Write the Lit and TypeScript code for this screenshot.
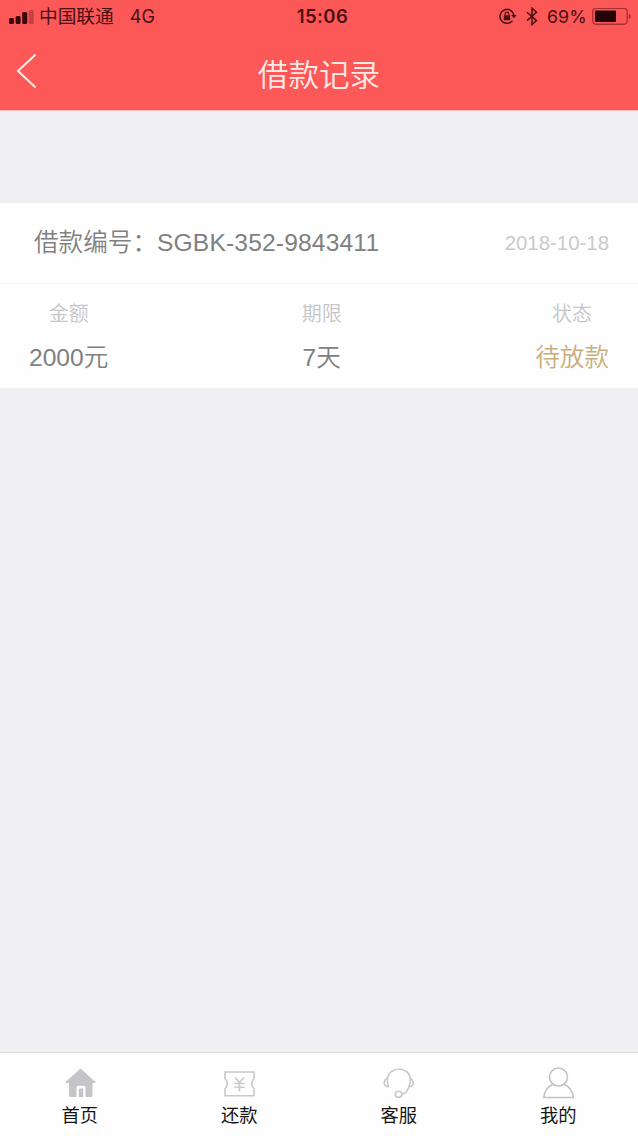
import { LitElement, html, css, svg } from "lit";
import { customElement, property } from "lit/decorators.js";

const FONT = css`"Liberation Sans", "Noto Sans CJK SC", sans-serif`;

@customElement("status-bar")
class StatusBar extends LitElement {
  static styles = css`
    :host { display: grid; grid-template-columns: 1fr auto 1fr; align-items: center; height: 33px; padding: 0 7px 0 9px; color: #4a1014; font: 400 18.7px/33px "Inter", "Noto Sans CJK SC", sans-serif; }
    .side { display: flex; align-items: center; }
    .right { justify-content: flex-end; }
    .signal { margin-right: 5px; }
    .network { margin-left: 16px; font-size: 18px; }
    .time { font-weight: 600; font-size: 18.5px; letter-spacing: 0.4px; padding-left: 5px; }
    .bluetooth { margin: 0 9px 0 9px; }
    .percent { font-size: 17.8px; margin-right: 5px; letter-spacing: 0.2px; }
    svg { display: block; flex: none; }
  `;
  render() {
    return html`
      <div class="side">
        <svg class="signal" width="25" height="16" viewBox="0 0 25 16">
          <g fill="#3a070b">
            <rect x="0" y="9" width="5" height="6" rx="1.5" />
            <rect x="6.6" y="7" width="5" height="8" rx="1.5" />
            <rect x="13.2" y="3" width="5" height="12" rx="1.5" />
          </g>
          <rect x="19.8" y="1" width="5" height="14" rx="1.5" fill="#c24347" />
        </svg>
        <span>中国联通</span><span class="network">4G</span>
      </div>
      <div class="time">15:06</div>
      <div class="side right">
        <svg width="18" height="17" viewBox="0 0 18 17" fill="none" stroke="#4a1014" stroke-width="1.5">
          <path d="M13.5 12.7A7 7 0 1 1 15 8" />
          <path d="M12.2 7h5.4l-2.7 3.4z" fill="#4a1014" stroke="none" />
          <rect x="4.8" y="7.3" width="6.4" height="4.9" rx=".6" fill="#4a1014" stroke="none" />
          <path d="M6.1 7.5V6a1.9 1.9 0 0 1 3.8 0v1.5" stroke-width="1.2" />
        </svg>
        <svg class="bluetooth" width="12" height="19" viewBox="0 0 12 19" fill="none" stroke="#4a1014" stroke-width="1.5">
          <path d="M1 5.2l9.5 8.4L6 17.6V1.2l4.5 4L1 13.6" />
        </svg>
        <span class="percent">69%</span>
        <svg width="39" height="18" viewBox="0 0 39 18">
          <rect x=".8" y=".3" width="34.4" height="16" rx="3.5" fill="none" stroke="#a92f36" stroke-width="1.4" />
          <rect x="3" y="2.5" width="21" height="11.6" rx="1" fill="#250205" />
          <path d="M36.8 5.500v5.600q2-.9 2-2.800t-2-2.800z" fill="#a92f36" />
        </svg>
      </div>`;
  }
}

@customElement("nav-header")
class NavHeader extends LitElement {
  @property() heading = "";
  static styles = css`
    :host { display: grid; grid-template-columns: 60px 1fr 60px; height: 77px; font-family: ${FONT}; }
    .back { padding: 20px 0 0 16px; }
    .heading { margin: 0; padding-top: 20px; text-align: center; font-weight: 350; font-size: 30.6px; line-height: 44px; color: #ffe9e6; }
    svg { display: block; }
  `;
  render() {
    return html`
      <div class="back">
        <svg width="22" height="36" viewBox="0 0 22 36" fill="none" stroke="#fff0e8" stroke-width="2">
          <path d="M19.600 1.500L2 18l17.600 16.500" />
        </svg>
      </div>
      <h1 class="heading">${this.heading}</h1>`;
  }
}

@customElement("loan-card")
class LoanCard extends LitElement {
  @property() number = "";
  @property() date = "";
  @property() amount = "";
  @property() term = "";
  @property() status = "";
  static styles = css`
    :host { display: block; height: 185px; background: #fefefe; font-family: ${FONT}; font-weight: 350; color: #808080; }
    .top { display: flex; justify-content: space-between; box-sizing: border-box; height: 81px; padding: 0 29px 0 34px; border-bottom: 1px solid #f4f4f5; line-height: 80px; font-size: 24.6px; }
    .code { letter-spacing: 0.16px; }
    .date { font-size: 20.4px; color: #cacaca; }
    .fields { display: flex; justify-content: space-between; padding: 15px 29px 0; text-align: center; }
    .label { font-size: 20px; line-height: 30px; color: #c6c6c6; }
    .value { margin-top: 11px; font-size: 24.6px; line-height: 36px; }
    .pending { color: #c9ad7c; }
  `;
  render() {
    return html`
      <div class="top">
        <span>借款编号：<span class="code">${this.number}</span></span>
        <span class="date">${this.date}</span>
      </div>
      <div class="fields">
        <div><div class="label">金额</div><div class="value">${this.amount}</div></div>
        <div><div class="label">期限</div><div class="value">${this.term}</div></div>
        <div><div class="label">状态</div><div class="value pending">${this.status}</div></div>
      </div>`;
  }
}

const icons = {
  home: svg`<path fill="#c5c5c9" fill-rule="evenodd" d="M16.500 1.500L31.500 15q.5 1-.8 1H28.500V28.500q0 1.500-1.500 1.500H6.500Q5 30 5 28.500V16H2.300Q1 16 1.500 15zM12.500 30h9V20.500q0-1.700-1.700-1.700h-5.600q-1.700 0-1.700 1.700z"/><path fill="#c5c5c9" d="M14.800 30v-7.500q0-1 1-1h2.400q1 0 1 1V30z"/>`,
  ticket: svg`<g fill="none" stroke="#c9c9cd" stroke-width="1.600"><path d="M2 5h29v6.500q-4.600 5 0 10.200v7H2v-7q4.600-5.200 0-10.200z"/><path d="M12 10.500l4.500 5 4.500-5M16.500 15.500v9M11.500 16.500h10M11.500 20.300h10"/></g>`,
  headset: svg`<g fill="none" stroke="#c9c9cd" stroke-width="1.600"><path d="M5.500 19.800C3.500 14 4.200 8 8.500 4.500Q16-.5 23.500 4.500C28 8 28 14 25.800 20Q23.500 26.800 18.800 27.200"/><path d="M4.800 11.200Q1.200 12.600 1.200 15.900T5.500 19.800M26.800 11.200q3.400 1.400 3.400 4.700T25.800 20"/><ellipse cx="15.600" cy="27.300" rx="3.300" ry="3.100"/></g>`,
  user: svg`<g fill="none" stroke="#c2c2c6" stroke-width="1.500"><circle cx="16.500" cy="10" r="9"/><path d="M11 17.200Q3 20.500 1.700 30.500h29.800Q30 20.500 22 17.200"/></g>`,
};

@customElement("tab-bar")
class TabBar extends LitElement {
  static styles = css`
    :host { display: grid; grid-template-columns: repeat(4, 1fr); box-sizing: border-box; height: 84px; border-top: 1px solid #dededf; background: #fefefe; font: 400 18.3px/28px "Noto Sans CJK SC", sans-serif; color: #151515; }
    .tab { display: flex; flex-direction: column; align-items: center; padding-top: 14px; }
    .icon { display: block; margin-bottom: 1px; }
  `;
  private tabs = [
    { icon: icons.home, label: "首页" },
    { icon: icons.ticket, label: "还款" },
    { icon: icons.headset, label: "客服" },
    { icon: icons.user, label: "我的" },
  ];
  render() {
    return this.tabs.map(
      (t) => html`<div class="tab">
        <svg class="icon" width="32" height="32" viewBox="0 0 32 32">${t.icon}</svg>
        <span>${t.label}</span>
      </div>`
    );
  }
}

@customElement("app-root")
class AppRoot extends LitElement {
  static styles = css`
    :host { display: flex; flex-direction: column; height: 100vh; overflow: hidden; background: #efeff4; }
    .header { height: 110px; background: #fc5857; border-bottom: 1px solid #f8bcc0; }
    .content { flex: 1; padding-top: 92px; }
  `;
  render() {
    return html`
      <div class="header">
        <status-bar></status-bar>
        <nav-header heading="借款记录"></nav-header>
      </div>
      <div class="content">
        <loan-card number="SGBK-352-9843411" date="2018-10-18" amount="2000元" term="7天" status="待放款"></loan-card>
      </div>
      <tab-bar></tab-bar>`;
  }
}
